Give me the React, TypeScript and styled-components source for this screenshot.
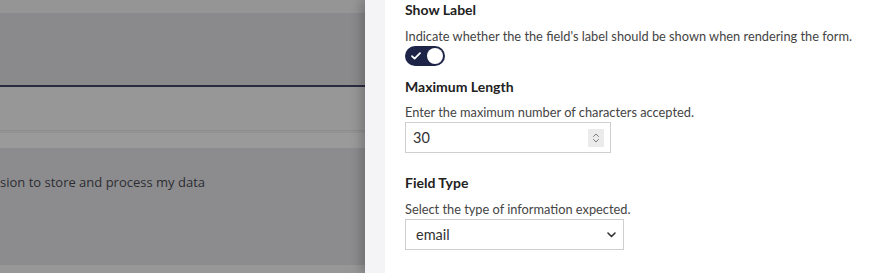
import React from 'react';
import styled, { createGlobalStyle } from 'styled-components';

const GlobalStyle = createGlobalStyle`
  html, body {
    margin: 0;
    padding: 0;
    background: #ffffff;
  }
  * {
    box-sizing: border-box;
  }
`;

const Page = styled.div`
  display: flex;
  width: 893px;
  height: 273px;
  overflow: hidden;
`;

/* dimmed page behind the drawer */
const Backdrop = styled.div`
  flex: 0 0 365px;
  display: flex;
  flex-direction: column;
  background: #8d8d8f;
`;

const Band = styled.div<{ $h: number; $bg: string; $line?: string }>`
  flex: 0 0 ${p => p.$h}px;
  background: ${p => p.$bg};
  border-bottom: ${p => (p.$line ? `1px solid ${p.$line}` : 'none')};
`;

const ConsentText = styled.div`
  padding-top: 25px;
  font-family: 'Open Sans', 'Noto Sans', sans-serif;
  font-size: 13px;
  line-height: 18px;
  color: #2c2c33;
  white-space: nowrap;
`;

const Drawer = styled.div`
  flex: 1;
  display: flex;
  box-shadow: -4px 0 10px rgba(0, 0, 0, 0.22);
  position: relative;
  z-index: 1;
`;

const Gutter = styled.div`
  flex: 0 0 20px;
  background: #f4f3f5;
`;

const Content = styled.div`
  flex: 1;
  background: #ffffff;
  padding: 0 20px;
  display: flex;
  flex-direction: column;
  font-family: Lato, 'Open Sans', sans-serif;
`;

const Heading = styled.div<{ $gap?: number }>`
  margin-top: ${p => p.$gap ?? 0}px;
  font-size: 14px;
  font-weight: 700;
  line-height: 20px;
  color: #222222;
`;

const Hint = styled.div<{ $gap: number }>`
  margin-top: ${p => p.$gap}px;
  font-size: 12.8px;
  line-height: 16px;
  color: #444444;
  white-space: nowrap;
`;

const Toggle = styled.div`
  margin-top: 2px;
  width: 40px;
  height: 20px;
  border-radius: 10px;
  background: #1d2447;
  display: flex;
  align-items: center;
  justify-content: space-between;
  padding: 0 2px 0 6px;
`;

const Knob = styled.span`
  width: 16px;
  height: 16px;
  border-radius: 50%;
  background: #ffffff;
`;

const NumberBox = styled.div`
  margin-top: 2px;
  width: 206px;
  height: 31px;
  border: 1px solid #cfcfcf;
  display: flex;
  align-items: center;
  justify-content: space-between;
  padding: 0 6px 0 7px;
  font-size: 14.5px;
  color: #333333;
`;

const Spinner = styled.span`
  width: 16px;
  height: 18px;
  background: #ebebeb;
  display: flex;
  align-items: center;
  justify-content: center;
`;

const SelectBox = styled.div`
  margin-top: 2px;
  width: 219px;
  height: 31px;
  border: 1px solid #cfcfcf;
  display: flex;
  align-items: center;
  justify-content: space-between;
  padding: 0 7px 0 10px;
  font-size: 14.5px;
  color: #333333;
`;

const App: React.FC = () => (
  <>
    <GlobalStyle />
    <Page>
      <Backdrop>
        <Band $h={13} $bg="#969596" />
        <Band $h={72} $bg="#8a898c" />
        <Band $h={2} $bg="#2b2b40" />
        <Band $h={44} $bg="#979797" $line="#8e8e8e" />
        <Band $h={2} $bg="#939393" />
        <Band $h={15} $bg="#9a9a9a" />
        <Band $h={117} $bg="#8c8c8e">
          <ConsentText>sion to store and process my data</ConsentText>
        </Band>
        <Band $h={8} $bg="#979797" />
      </Backdrop>
      <Drawer>
        <Gutter />
        <Content>
          <Heading>Show Label</Heading>
          <Hint $gap={8}>Indicate whether the the field's label should be shown when rendering the form.</Hint>
          <Toggle>
            <svg width="10" height="8" viewBox="0 0 10 8" fill="none">
              <path d="M1 4.2L3.6 6.6L9 1.2" stroke="#ffffff" strokeWidth="1.8" strokeLinecap="round" strokeLinejoin="round" />
            </svg>
            <Knob />
          </Toggle>
          <Heading $gap={11}>Maximum Length</Heading>
          <Hint $gap={7}>Enter the maximum number of characters accepted.</Hint>
          <NumberBox>
            30
            <Spinner>
              <svg width="8" height="12" viewBox="0 0 8 12" fill="none">
                <path d="M1.5 4.5L4 2L6.5 4.5M1.5 7.5L4 10L6.5 7.5" stroke="#7a7a7a" strokeWidth="1" strokeLinecap="round" strokeLinejoin="round" />
              </svg>
            </Spinner>
          </NumberBox>
          <Heading $gap={20}>Field Type</Heading>
          <Hint $gap={8}>Select the type of information expected.</Hint>
          <SelectBox>
            email
            <svg width="9" height="6" viewBox="0 0 9 6" fill="none">
              <path d="M1 1L4.5 4.5L8 1" stroke="#333333" strokeWidth="1.6" strokeLinecap="round" strokeLinejoin="round" />
            </svg>
          </SelectBox>
        </Content>
      </Drawer>
    </Page>
  </>
);

export default App;
